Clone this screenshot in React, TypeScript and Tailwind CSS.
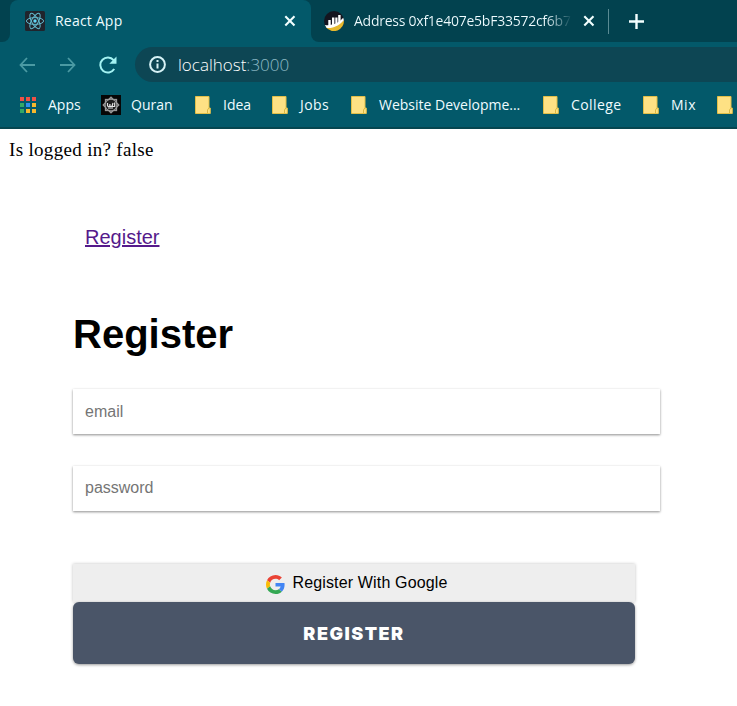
import React from 'react';

const chromeFont = "font-['Open_Sans','Noto_Sans',sans-serif]";

function Close({ className = '' }: { className?: string }) {
  return (
    <svg className={`shrink-0 ${className}`} width="12" height="12" viewBox="0 0 12 12" stroke="#f2ffff" strokeWidth="2.1">
      <path d="M1.3 1.3l9.2 9.2M10.5 1.3l-9.2 9.2" />
    </svg>
  );
}

function ReactIcon() {
  return (
    <svg className="shrink-0" width="20" height="20" viewBox="0 0 20 20">
      <rect width="20" height="20" rx="1.5" fill="#20242c" />
      <g fill="none" stroke="#62b9cd" strokeWidth="1">
        <ellipse cx="10" cy="10" rx="8.6" ry="3.4" />
        <ellipse cx="10" cy="10" rx="8.6" ry="3.4" transform="rotate(60 10 10)" />
        <ellipse cx="10" cy="10" rx="8.6" ry="3.4" transform="rotate(120 10 10)" />
      </g>
      <circle cx="10" cy="10" r="1.7" fill="#62d5f5" />
    </svg>
  );
}

function ScanIcon() {
  return (
    <svg className="shrink-0" width="20" height="20" viewBox="0 0 20 20">
      <circle cx="10" cy="10" r="10" fill="#14151f" />
      <path d="M2 16.2C9 16 15 13 19.9 9.2A10 10 0 0 1 2 16.2z" fill="#e6b92e" />
      <path d="M.8 14C8 15 15 12 19.2 6.8l.7 2.4C16 14 9 17.6 2.7 16.9z" fill="#fff" />
      <path d="M4.3 9h2.4v7H4.3zM8 6.5h2.4v9H8zM11.3 6.5h2.2v8h-2.2zM14.2 4h2.4v8h-2.4z" fill="#fff" />
    </svg>
  );
}

function QuranIcon() {
  return (
    <svg className="shrink-0" width="20" height="20" viewBox="0 0 20 20" fill="none">
      <rect width="20" height="20" fill="#060606" />
      <g stroke="#999" strokeWidth="1.5">
        <rect x="4.6" y="4.6" width="10.8" height="10.8" />
        <rect x="4.6" y="4.6" width="10.8" height="10.8" transform="rotate(45 10 10)" />
      </g>
      <circle cx="10" cy="10" r="5.3" fill="#1d1d1d" />
      <path d="M6.5 8v2.5q0 1 1.2 1t1.2-1V9v1.5q0 1 1 1t1.2-1M13.7 7.5v4h-2.7l1-3.5M7 13h5" stroke="#e4e4e4" strokeWidth="1.2" />
    </svg>
  );
}

function AppsIcon() {
  const colors = ['#ef5146', '#ef5146', '#ef5146', '#35a865', '#3090ed', '#f6b82d', '#35a865', '#f6b82d', '#f6b82d'];
  return (
    <div className="grid shrink-0 grid-cols-3 gap-[2px]">
      {colors.map((c, i) => (
        <span key={i} className="size-[4px]" style={{ backgroundColor: c }} />
      ))}
    </div>
  );
}

function Folder() {
  return (
    <svg className="shrink-0" width="16" height="18" viewBox="0 0 16 18">
      <path d="M.5.5H14V12h1.3v5.5H.5z" fill="#fee184" stroke="#e2bf48" />
      <path d="M12.5 17v-3l1.3-2" fill="none" stroke="#d8b743" />
    </svg>
  );
}

function GoogleIcon() {
  return (
    <svg className="mt-[2px] shrink-0" width="19" height="19" viewBox="0 0 48 48">
      <path fill="#EA4335" d="M24 9.5c3.54 0 6.71 1.22 9.21 3.6l6.85-6.85C35.9 2.38 30.47 0 24 0 14.62 0 6.51 5.38 2.56 13.22l7.98 6.19C12.43 13.72 17.74 9.5 24 9.5z" />
      <path fill="#4285F4" d="M46.98 24.55c0-1.57-.15-3.09-.38-4.55H24v9.02h12.94c-.58 2.96-2.26 5.48-4.78 7.18l7.73 6c4.51-4.18 7.09-10.36 7.09-17.65z" />
      <path fill="#FBBC05" d="M10.53 28.59c-.48-1.45-.76-2.99-.76-4.59s.27-3.14.76-4.59l-7.98-6.19C.92 16.46 0 20.12 0 24c0 3.88.92 7.54 2.56 10.78l7.97-6.19z" />
      <path fill="#34A853" d="M24 48c6.48 0 11.93-2.13 15.89-5.81l-7.73-6c-2.15 1.45-4.92 2.3-8.16 2.3-6.26 0-11.57-4.22-13.47-9.91l-7.98 6.19C6.51 42.62 14.62 48 24 48z" />
    </svg>
  );
}

function Bookmark({ icon, label, width, labelClass }: { icon: React.ReactNode; label: string; width: string; labelClass: string }) {
  return (
    <div className={`flex shrink-0 items-center ${width}`}>
      {icon}
      <span className={`-mt-[2px] whitespace-nowrap ${labelClass}`}>{label}</span>
    </div>
  );
}

function BrowserChrome() {
  return (
    <header className={`h-[129px] overflow-hidden border-b-2 border-[#064650] bg-[#03596a] text-[14px] text-[#effcff] ${chromeFont}`}>
      <div className="flex h-[42px]">
        <div className="w-[10px] shrink-0 rounded-br-lg bg-[#02424f]" />
        <div className="w-[301px] shrink-0 bg-[#02424f]">
          <div className="flex h-full items-center rounded-t-lg bg-[#03596a] pl-[15px]">
            <ReactIcon />
            <span className="-mt-[2px] ml-[10px] w-[229px] whitespace-nowrap tracking-[0.2px]">React App</span>
            <Close />
          </div>
        </div>
        <div className="flex flex-1 items-center rounded-bl-lg bg-[#02424f] pl-[13px]">
          <ScanIcon />
          <span className="-mt-[2px] ml-[10px] w-[218px] shrink-0 bg-gradient-to-r from-[#effcff] from-[88%] to-transparent bg-clip-text whitespace-nowrap text-transparent tracking-[-0.25px]">
            Address 0xf1e407e5bF33572cf6b7
          </span>
          <Close className="ml-[11px]" />
          <span className="ml-[13px] h-[25px] w-px shrink-0 bg-[#5a8b94]" />
          <svg className="ml-[20px] shrink-0" width="15" height="15" viewBox="0 0 15 15" stroke="#f4ffff" strokeWidth="2.4">
            <path d="M7.5 0v15M0 7.5h15" />
          </svg>
        </div>
      </div>
      <div className="flex h-[45px] items-center pl-[19px]">
        <svg width="17" height="16" viewBox="0 0 17 16" fill="none" stroke="#4b9aa3" strokeWidth="1.8">
          <path d="M16 8H2M8 1L1.5 8 8 15" />
        </svg>
        <svg className="ml-[23px]" width="17" height="16" viewBox="0 0 17 16" fill="none" stroke="#4b9aa3" strokeWidth="1.8">
          <path d="M1 8h14M9 1l6.5 7L9 15" />
        </svg>
        <svg className="ml-[23px]" width="18" height="18" viewBox="0 0 18 18" fill="none" stroke="#a4f2f2" strokeWidth="2">
          <path d="M15.2 13A7.5 7.5 0 1 1 14.6 4.2" />
          <path d="M17.5.5v7.2h-7.2z" fill="#a4f2f2" stroke="none" />
        </svg>
        <div className="ml-[18px] flex h-[35px] flex-1 items-center rounded-l-full bg-[#0d4654] pl-[14px]">
          <svg width="17" height="17" viewBox="0 0 17 17" fill="none" stroke="#d7f2f6" strokeWidth="2">
            <circle cx="8.5" cy="8.5" r="7.4" />
            <path d="M8.5 7.5v5M8.5 4v2" />
          </svg>
          <span className="ml-[12px] text-[17px] font-light text-white">
            localhost<span className="text-[#8dbbc6]">:3000</span>
          </span>
        </div>
      </div>
      <nav className="flex h-[36px] items-center pl-5">
        <Bookmark icon={<AppsIcon />} label="Apps" width="w-[81px]" labelClass="ml-[12px]" />
        <Bookmark icon={<QuranIcon />} label="Quran" width="w-[94px]" labelClass="ml-[10px]" />
        <Bookmark icon={<Folder />} label="Idea" width="w-[77px]" labelClass="ml-[12px]" />
        <Bookmark icon={<Folder />} label="Jobs" width="w-[79px]" labelClass="ml-[12px] tracking-[0.4px]" />
        <Bookmark icon={<Folder />} label="Website Developme..." width="w-[192px]" labelClass="ml-[12px]" />
        <Bookmark icon={<Folder />} label="College" width="w-[100px]" labelClass="ml-[12px] tracking-[0.4px]" />
        <Bookmark icon={<Folder />} label="Mix" width="w-[74px]" labelClass="ml-[12px] tracking-[0.5px]" />
        <Folder />
      </nav>
    </header>
  );
}

export default function App() {
  const field =
    "block h-[45px] w-[587px] bg-white px-3 text-[16px] text-[#757575] placeholder-[#757575] outline-none shadow-[0_1px_3px_rgba(0,0,0,0.2),0_1px_2px_rgba(0,0,0,0.28)]";
  return (
    <div className="h-[706px] w-[737px] overflow-hidden bg-white font-['Liberation_Sans',Arial,sans-serif] text-black">
      <BrowserChrome />
      <main>
        <p className="pt-[9px] pl-[9px] font-['Liberation_Serif',serif] text-[19px] leading-6 tracking-[0.32px]">Is logged in? false</p>
        <div className="pt-[61px] pl-[85px]">
          <a href="#" className="text-[20px] leading-7 text-[#551a8b] underline">Register</a>
        </div>
        <form className="pl-[73px]" onSubmit={(e) => e.preventDefault()}>
          <h1 className="mt-[59px] text-[40px] leading-[48px] font-bold">Register</h1>
          <input className={`mt-[31px] ${field}`} placeholder="email" />
          <input className={`mt-8 pb-[2px] ${field}`} type="password" placeholder="password" />
          <button type="button" className="mt-[53px] flex h-[38px] w-[562px] items-center justify-center bg-[#eee] pl-[6px] text-[16px] shadow-[0_0_3px_rgba(0,0,0,0.25)]">
            <GoogleIcon />
            <span className="ml-[7px] tracking-[0.15px]">Register With Google</span>
          </button>
          <button className="relative flex h-[62px] w-[562px] items-center justify-center rounded-md bg-[#4a5568] font-['Inter','Liberation_Sans',sans-serif] text-[18px] font-black tracking-[1.5px] text-white shadow-[0_1px_3px_rgba(0,0,0,0.4)]">
            REGISTER
          </button>
        </form>
      </main>
    </div>
  );
}
